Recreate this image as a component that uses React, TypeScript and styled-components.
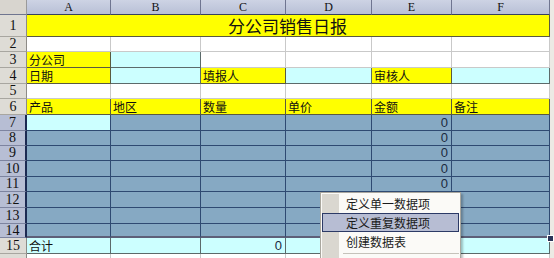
import * as React from "react";
import styled, { createGlobalStyle, css } from "styled-components";

type Tone = "yellow" | "cyan" | "white" | "sel" | "active";

interface ICell {
  text?: string;
  tone: Tone;
  align?: "left" | "right" | "center";
  span?: number;
  big?: boolean;
}

interface IRow {
  num: string;
  height: number;
  selected?: boolean;
  cells: ICell[];
}

const GlobalStyle = createGlobalStyle`
  html, body {
    margin: 0;
    padding: 0;
    background: #ffffff;
    overflow: hidden;
  }
`;

const Page = styled.div`
  position: relative;
  width: 554px;
  height: 258px;
  overflow: hidden;
  background: #eceae4;
  font-family: "Noto Sans CJK SC", "Liberation Sans", sans-serif;
`;

const Sheet = styled.div<{ $rows: string }>`
  display: grid;
  grid-template-columns: 27px 84px 90px 85px 86px 80px 98px 4px;
  grid-template-rows: ${(p) => p.$rows};
`;

const Corner = styled.div`
  background: #d8d5cf;
  border-right: 1px solid #9a9a9a;
  border-bottom: 1px solid #6f7590;
  box-sizing: border-box;
`;

const ColHead = styled.div`
  background: linear-gradient(#cdd3e4, #b9c0d6);
  border-right: 1px solid #6f7590;
  border-bottom: 1px solid #36405e;
  box-sizing: border-box;
  display: flex;
  align-items: center;
  justify-content: center;
  font-family: "Liberation Serif", serif;
  font-size: 12px;
  color: #111;
`;

const Gutter = styled.div`
  background: #eceae4;
`;

const RowHead = styled.div<{ $selected?: boolean }>`
  box-sizing: border-box;
  display: flex;
  align-items: center;
  justify-content: center;
  font-family: "Liberation Serif", serif;
  font-size: 14px;
  color: #111;
  border-bottom: 1px solid #a8a6a0;
  ${(p) =>
    p.$selected
      ? css`
          background: #b7bed4;
          border-right: 2px solid #1c2a52;
          border-bottom-color: #7d84a0;
        `
      : css`
          background: #dedcd6;
          border-right: 1px solid #8d8b86;
        `}
`;

const tones = {
  yellow: css`
    background: #ffff00;
    border-right: 1px solid #5a5a40;
    border-bottom: 1px solid #5a5a40;
  `,
  cyan: css`
    background: #ccffff;
    border-right: 1px solid #5c6a6a;
    border-bottom: 1px solid #5c6a6a;
  `,
  white: css`
    background: #ffffff;
    border-right: 1px solid #c9c9c9;
    border-bottom: 1px solid #c9c9c9;
  `,
  sel: css`
    background: #86a9c3;
    border-right: 1px solid #2f4a72;
    border-bottom: 1px solid #2f4a72;
  `,
  active: css`
    background: #ccffff;
    border-right: 1px solid #2f4a72;
    border-bottom: 1px solid #2f4a72;
  `,
};

const Cell = styled.div<{ $tone: Tone; $align: string; $span: number; $last?: boolean }>`
  box-sizing: border-box;
  grid-column: span ${(p) => p.$span};
  display: flex;
  align-items: flex-end;
  justify-content: ${(p) =>
    p.$align === "right" ? "flex-end" : p.$align === "center" ? "center" : "flex-start"};
  padding: 0 3px 0 2px;
  overflow: hidden;
  white-space: nowrap;
  font-size: 12px;
  line-height: 14px;
  color: #111;
  ${(p) => tones[p.$tone]}
  ${(p) =>
    p.$last &&
    css`
      border-bottom: 2px solid #5d5f78;
    `}
`;

const Title = styled.span`
  font-size: 17px;
  line-height: 20px;
`;

const Num = styled.span`
  font-family: "Liberation Sans", sans-serif;
  font-size: 13px;
  color: #1b2a3e;
`;

const Handle = styled.div`
  position: absolute;
  left: 547px;
  top: 235px;
  width: 5px;
  height: 5px;
  background: #2a3558;
  border: 1px solid #ffffff;
`;

const Menu = styled.div`
  position: absolute;
  left: 320px;
  top: 192px;
  width: 137px;
  padding: 1px;
  background: #fbfaf7;
  border: 1px solid #a9a79f;
  box-shadow: 2px 2px 2px rgba(0, 0, 0, 0.25);
  display: flex;
  flex-direction: column;
`;

const Item = styled.div<{ $hot?: boolean }>`
  position: relative;
  height: 19px;
  display: flex;
  align-items: center;
  box-sizing: border-box;
  font-size: 12px;
  color: #1a1a1a;
  padding-left: 24px;
  background: linear-gradient(90deg, #dad7d0 0, #dad7d0 17px, transparent 17px);
  ${(p) =>
    p.$hot &&
    css`
      background: #b7bdd3;
      border: 1px solid #2c3a66;
      padding-left: 23px;
    `}
`;

const Separator = styled.div`
  height: 5px;
  background: linear-gradient(90deg, #dad7d0 0, #dad7d0 17px, transparent 17px);
  display: flex;
  align-items: center;
  &::after {
    content: "";
    margin-left: 21px;
    flex: 1;
    height: 1px;
    background: #c5c2ba;
  }
`;

const heading = ["产品", "地区", "数量", "单价", "金额", "备注"];

function fill(tone: Tone, n = 6): ICell[] {
  return Array.from({ length: n }, () => ({ tone }));
}

function selRow(num: string, h: number, zero: boolean, first: Tone = "sel"): IRow {
  return {
    num,
    height: h,
    selected: true,
    cells: [
      { tone: first },
      { tone: "sel" },
      { tone: "sel" },
      { tone: "sel" },
      { tone: "sel", text: zero ? "0" : undefined, align: "right" },
      { tone: "sel" },
    ],
  };
}

const rows: IRow[] = [
  { num: "1", height: 22, cells: [{ tone: "yellow", text: "分公司销售日报", align: "center", span: 6, big: true }] },
  { num: "2", height: 15, cells: fill("white") },
  {
    num: "3",
    height: 16,
    cells: [{ tone: "yellow", text: "分公司" }, { tone: "cyan" }, ...fill("white", 4)],
  },
  {
    num: "4",
    height: 16,
    cells: [
      { tone: "yellow", text: "日期" },
      { tone: "cyan" },
      { tone: "yellow", text: "填报人" },
      { tone: "cyan" },
      { tone: "yellow", text: "审核人" },
      { tone: "cyan" },
    ],
  },
  { num: "5", height: 15, cells: fill("white") },
  { num: "6", height: 16, cells: heading.map((text) => ({ tone: "yellow" as Tone, text })) },
  selRow("7", 16, true, "active"),
  selRow("8", 15, true),
  selRow("9", 15, true),
  selRow("10", 16, true),
  selRow("11", 15, true),
  selRow("12", 16, false),
  selRow("13", 16, false),
  selRow("14", 14, false),
  {
    num: "15",
    height: 16,
    cells: [
      { tone: "cyan", text: "合计" },
      { tone: "cyan" },
      { tone: "cyan", text: "0", align: "right" },
      { tone: "cyan" },
      { tone: "cyan" },
      { tone: "cyan" },
    ],
  },
  { num: "", height: 16, cells: fill("white") },
];

function content(cell: ICell) {
  if (cell.big) return <Title>{cell.text}</Title>;
  if (cell.text === "0") return <Num>0</Num>;
  return cell.text;
}

export default function App() {
  const template = ["15px", ...rows.map((r) => `${r.height}px`)].join(" ");
  return (
    <Page>
      <GlobalStyle />
      <Sheet $rows={template}>
        <Corner />
        {["A", "B", "C", "D", "E", "F"].map((c) => (
          <ColHead key={c}>{c}</ColHead>
        ))}
        <Gutter />
        {rows.map((row, r) => (
          <React.Fragment key={r}>
            <RowHead $selected={row.selected}>{row.num}</RowHead>
            {row.cells.map((cell, i) => (
              <Cell
                key={i}
                $tone={cell.tone}
                $align={cell.align ?? "left"}
                $span={cell.span ?? 1}
                $last={row.num === "14"}
              >
                {content(cell)}
              </Cell>
            ))}
            <Gutter />
          </React.Fragment>
        ))}
      </Sheet>
      <Handle />
      <Menu>
        <Item>定义单一数据项</Item>
        <Item $hot>定义重复数据项</Item>
        <Item>创建数据表</Item>
        <Separator />
        <Item>定义表间公式</Item>
      </Menu>
    </Page>
  );
}
